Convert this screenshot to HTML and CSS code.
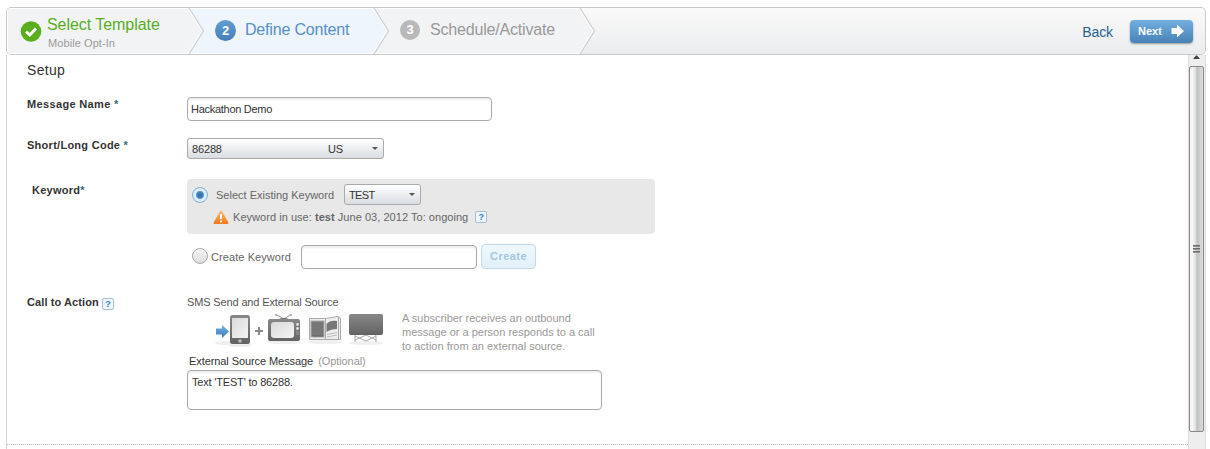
FILE: index.html
```html
<!DOCTYPE html>
<html lang="en">
<head>
<meta charset="utf-8">
<title>Define Content</title>
<link rel="stylesheet" href="styles.css">
</head>
<body>
<header class="wizard">
  <svg class="steps-bg" width="594" height="46" viewBox="0 0 594 46" aria-hidden="true">
    <path d="M0 0H573L587.500 23L573 46H0Z" fill="#f2f3f5"/>
    <path d="M182 0H367L381.500 23L367 46H182L196.500 23Z" fill="#eff5fd"/>
    <path d="M0.500 46V.5H181L195 23L181 45.500H0M183 .5H366L380 23L366 45.500H183M368 .5H572L586 23L572 45.500H368" fill="none" stroke="#fff"/>
    <path d="M182 0L196.500 23L182 46M367 0L381.500 23L367 46M573 0L587.500 23L573 46" fill="none" stroke="#cfcfcf" stroke-width="1.200"/>
  </svg>
  <nav class="steps">
    <div class="step step-done">
      <svg class="check" width="22" height="23" viewBox="0 0 22 23"><circle cx="11" cy="11.500" r="10.300" fill="#58ae1c"/><path d="M6 11.500L9.800 15L16 8.500" fill="none" stroke="#fff" stroke-width="3"/></svg>
      <div class="titles"><span class="step-title">Select Template</span><span class="step-sub">Mobile Opt-In</span></div>
    </div>
    <div class="step step-current"><span class="num">2</span><span class="step-title">Define Content</span></div>
    <div class="step step-next"><span class="num">3</span><span class="step-title">Schedule/Activate</span></div>
  </nav>
  <div class="actions">
    <a class="back">Back</a>
    <button class="next"><span>Next</span><svg width="14" height="14" viewBox="0 0 14 14"><path d="M.5 4H6V.5L13 7L6 13.500V10H.5Z" fill="#fff"/></svg></button>
  </div>
</header>
<div class="panel">
  <main class="form">
    <h1 class="heading">Setup</h1>
    <div class="row row-name">
      <label class="label name-label">Message Name <i>*</i></label>
      <div class="input name-input"><span>Hackathon Demo</span></div>
    </div>
    <div class="row row-code">
      <label class="label code-label">Short/Long Code <i>*</i></label>
      <div class="select code-select"><span class="code">86288</span><span class="country">US</span><b class="arrow"></b></div>
    </div>
    <div class="row row-keyword">
      <label class="label keyword-label">Keyword<i>*</i></label>
      <div class="keyword">
        <div class="keyword-box">
          <div class="existing"><span class="radio radio-on"></span><span class="existing-text">Select Existing Keyword</span><div class="select key-select"><span>TEST</span><b class="arrow"></b></div></div>
          <div class="usage">
            <svg width="16" height="15" viewBox="0 0 16 15"><defs><linearGradient id="warn" x2="0" y2="1"><stop stop-color="#ffb765"/><stop offset="1" stop-color="#f47b20"/></linearGradient></defs><path d="M8 1.500L14.500 13H1.500Z" fill="url(#warn)" stroke="url(#warn)" stroke-width="2" stroke-linejoin="round"/><path d="M8 4V9M8 10.500V12.500" stroke="#fff" stroke-width="2"/></svg>
            <span class="usage-text">Keyword in use: <b>test</b> June 03, 2012 To: ongoing</span><span class="help">?</span>
          </div>
        </div>
        <div class="create"><span class="radio"></span><span class="create-text">Create Keyword</span><div class="input create-input"></div><button class="create-button">Create</button></div>
      </div>
    </div>
    <div class="row row-action">
      <label class="label action-label">Call to Action <span class="help">?</span></label>
      <div class="action">
        <div class="action-name"><span>SMS Send and External Source</span></div>
        <div class="source">
          <svg class="devices" width="172" height="36" viewBox="0 0 172 36">
            <defs>
              <linearGradient id="dark" x2="0" y2="1"><stop stop-color="#888"/><stop offset="1" stop-color="#636363"/></linearGradient>
              <linearGradient id="screen" x2="1" y2="1"><stop stop-color="#dadada"/><stop offset="1" stop-color="#f4f4f4"/></linearGradient>
              <linearGradient id="blue" x2="0" y2="1"><stop stop-color="#72b0e3"/><stop offset="1" stop-color="#3c7fbd"/></linearGradient>
            </defs>
            <g fill="#000" opacity=".06"><ellipse cx="10" cy="29" rx="10" ry="2"/><ellipse cx="25" cy="31" rx="12" ry="2"/><ellipse cx="69" cy="28" rx="17" ry="2"/><ellipse cx="110" cy="28" rx="17" ry="2"/><ellipse cx="151" cy="29" rx="17" ry="2"/></g>
            <path d="M1 14.500H7V11L14 17.500L7 24V20.500H1Z" fill="url(#blue)"/>
            <rect x="15" y="1" width="20" height="29" rx="2.500" fill="url(#dark)"/><rect x="17" y="4" width="16" height="20" fill="url(#screen)"/><circle cx="25" cy="27" r="1.800" fill="#bbb"/>
            <path d="M40 17H48M44 13V21" stroke="#888" stroke-width="2"/>
            <path d="M69 5L62 1M69 5L75 1" stroke="#999" fill="none"/><circle cx="61" cy="1" r="1" fill="#999"/><circle cx="76" cy="1" r="1" fill="#999"/>
            <path d="M63 5.500Q69 2 75 5.500" fill="#777"/><rect x="53" y="5" width="32" height="22" rx="2" fill="url(#dark)"/><rect x="56" y="8" width="23" height="16" rx="3" fill="url(#screen)"/><g fill="#e2e2e2"><circle cx="82.500" cy="10.500" r="1.400"/><circle cx="82.500" cy="14.500" r="1.400"/></g><path d="M81 18H84M81 20H84" stroke="#999"/>
            <path d="M94.500 4.500H110L123 2.500L125.500 4V25.500H94.500Z" fill="#ededed" stroke="#aaa"/><path d="M110.500 5V26M123.500 3V25" stroke="#aaa"/>
            <rect x="96" y="7" width="13" height="16" fill="#777" stroke="#aaa"/><path d="M98 22H108" stroke="#666"/><path d="M111.500 10Q115 6 122 7V15Q116 15 111.500 18Z" fill="#777"/><path d="M112 20.500L122 18.500M112 23L122 21" stroke="#bbb"/>
            <path d="M140 20V28M161 20V28M140 26L151 21L161 26M140 22L151 27L161 22" fill="none" stroke="#aaa"/><rect x="134" y="0" width="34" height="21" rx="2" fill="url(#dark)"/>
          </svg>
          <p class="description"><span>A subscriber receives an outbound</span><span>message or a person responds to a call</span><span>to action from an external source.</span></p>
        </div>
        <div class="message-label"><span class="m1">External Source Message</span><span class="optional">(Optional)</span></div>
        <div class="input message"><span>Text 'TEST' to 86288.</span></div>
      </div>
    </div>
    <div class="divider"></div>
  </main>
  <aside class="scrollbar">
    <svg class="up" width="17" height="11" viewBox="0 0 17 11"><path d="M4 4L7 .5H8L11 4Z" fill="#444"/></svg>
    <div class="thumb"><i></i><i></i><i></i></div>
  </aside>
</div>
</body>
</html>
```
FILE: styles.css
```css
* { box-sizing: border-box; }
body { margin: 0; padding: 7px 4px 0 6px; height: 449px; overflow: hidden; background: #fff; font: 11px/14px "Liberation Sans", Arial, sans-serif; color: #333; }
span, label { white-space: nowrap; }
i { font-style: normal; }
button { font-family: inherit; }
.wizard { position: relative; display: flex; justify-content: space-between; height: 48px; border: 1px solid #c9c9c9; border-radius: 5px; background: linear-gradient(#fafafa, #ebecee); overflow: hidden; }
.steps-bg { position: absolute; left: 0; top: 0; }
.steps { position: relative; display: flex; }
.step { display: flex; align-items: flex-start; }
.step-done { width: 208px; padding: 12px 0 0 13px; }
.check { flex: none; }
.titles { display: flex; flex-direction: column; margin: -5px 0 0 5px; }
.step-title { font-size: 16px; line-height: 20px; letter-spacing: -.05px; }
.step-done .step-title { color: #58ae1c; }
.step-sub { color: #999; margin: 1px 0 0 1px; line-height: 14px; letter-spacing: .08px; }
.num { width: 21px; height: 21px; border-radius: 50%; color: #fff; font: bold 13px/21px "Liberation Sans", Arial, sans-serif; text-align: center; background: linear-gradient(#5f9ed3, #467fb6); }
.step-current { width: 185px; padding-top: 12px; }
.step-current .step-title { color: #5590c7; margin-left: 9px; letter-spacing: -.18px; }
.step-next { padding-top: 12px; }
.step-next .num { background: #b9b9b9; width: 20px; height: 20px; line-height: 20px; }
.step-next .step-title { color: #999; margin-left: 10px; letter-spacing: -.18px; }
.actions { display: flex; align-items: flex-start; padding: 12px 12px 0 0; gap: 17px; }
.back { font-size: 14px; line-height: 16px; letter-spacing: -.1px; color: #286090; margin-top: 4px; }
.next { display: flex; align-items: center; justify-content: space-between; width: 63px; height: 23px; border: 0; border-radius: 4px; padding: 0 8px 1px; color: #fff; font-weight: bold; font-size: 11px; background: linear-gradient(#73afe1, #4781b5); box-shadow: 0 1px 2px #999; }
.panel { display: flex; height: 394px; border-left: 1px solid #d5d5d5; border-right: 1px solid #ddd; }
.form { flex: 1; display: flex; flex-direction: column; }
.heading { margin: 5px 0 0 20px; height: 37px; font-weight: normal; font-size: 14px; line-height: 20px; letter-spacing: .3px; }
.row { display: grid; grid-template-columns: 180px 480px; flex: none; }
.label { padding-left: 20px; font-weight: bold; }
.label i { color: #3e6a7b; font-weight: bold; }
.name-label { letter-spacing: .35px; }
.code-label { letter-spacing: .27px; }
.row-name { height: 41px; }
.row-code { height: 41px; }
.row-keyword { height: 116px; }
.row-action { height: 148px; }
.input { border: 1px solid #aaa; border-radius: 4px; background: #fff; box-shadow: inset 0 2px 2px #eee; }
.name-input { width: 305px; height: 24px; padding: 4px 3px; letter-spacing: -.28px; }
.select { display: flex; align-items: center; border: 1px solid #aaa; border-radius: 3px; background: linear-gradient(#fff, #d9dde1); }
.arrow { width: 0; height: 0; border: 3px solid transparent; border-top-color: #555; border-bottom: 0; margin-left: auto; }
.code-select { width: 197px; height: 21px; padding: 0 5px 0 4px; letter-spacing: -.15px; }
.code { width: 136px; }
.keyword-label { padding: 4px 0 0 25px; letter-spacing: .25px; }
.keyword-box { width: 468px; height: 55px; border-radius: 4px; background: #e8e8e8; padding: 5px; color: #666; }
.existing, .usage, .create { display: flex; align-items: center; }
.radio { flex: none; width: 16px; height: 16px; border: 1px solid #aaa; border-radius: 50%; background: linear-gradient(#f8f8f8, #ddd); }
.radio-on { border-color: #83afd4; background: radial-gradient(circle, #3876af 0 2px, #5492c9 3.5px, #ddedf8 4.5px); }
.existing-text { width: 136px; padding-left: 8px; }
.key-select { width: 77px; height: 21px; color: #333; padding: 0 5px 0 4px; letter-spacing: -.6px; }
.usage { margin: 4px 0 0 21px; height: 16px; }
.usage-text { margin-left: 4px; letter-spacing: .04px; }
.help { display: inline-block; width: 12px; height: 12px; border: 1px solid #a8bfd3; border-radius: 2px; color: #397ebc; background: #eef5fb; font: bold 9px/10px "Liberation Sans", Arial, sans-serif; text-align: center; letter-spacing: 0; }
.usage .help { margin-left: 7px; }
.create { height: 25px; margin: 10px 0 0 5px; color: #666; }
.create .radio { margin-top: -2px; }
.create-text { width: 93px; padding-left: 3px; letter-spacing: .08px; }
.create-input { width: 176px; height: 24px; }
.create-button { margin-left: 4px; width: 55px; height: 25px; padding: 0 0 2px; border: 1px solid #c4d9e8; border-radius: 4px; background: linear-gradient(#eff7fd, #e2f0fa); color: #a3c6e1; font-weight: bold; font-size: 11px; letter-spacing: .45px; }
.action-label { letter-spacing: .1px; }
.label .help { vertical-align: -1px; }
.action-name { height: 14px; color: #555; letter-spacing: -.14px; }
.source { display: flex; height: 45px; margin-left: 28px; }
.devices { margin-top: 5px; }
.description { display: flex; flex-direction: column; margin: 2px 0 0 15px; line-height: 14px; color: #999; }
.message-label { display: flex; height: 16px; padding-left: 2px; color: #333; letter-spacing: -.08px; }
.optional { color: #999; margin-left: 5px; }
.message { width: 415px; height: 40px; padding: 4px; letter-spacing: -.18px; }
.divider { height: 1px; margin-top: auto; margin-bottom: 4px; background: repeating-linear-gradient(90deg, #bbb 0 1px, transparent 1px 2px); }
.scrollbar { width: 17px; background: #eee; border-left: 1px solid #ddd; display: flex; flex-direction: column; }
.up { display: block; }
.thumb { width: 15px; height: 366px; border: 1px solid #888; border-radius: 2px; background: linear-gradient(90deg, #f5f5f5 0 20%, #dedede 45%, #bfc0c5 52%, #dcdde0); display: flex; flex-direction: column; align-items: center; justify-content: center; gap: 1px; }
.thumb i { width: 7px; height: 2px; background: linear-gradient(#555, #aaa); }
```
